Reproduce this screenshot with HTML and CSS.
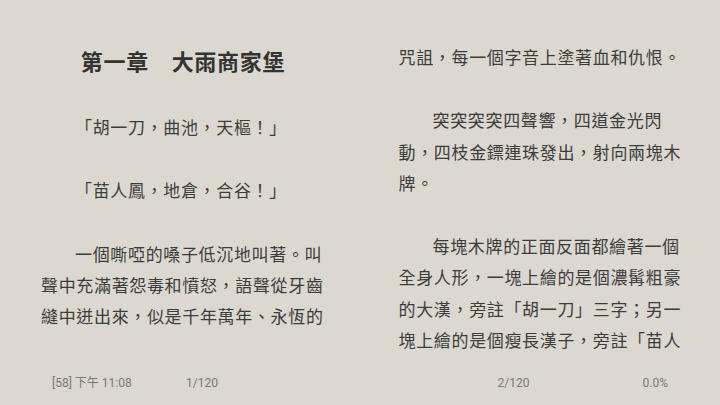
FILE: index.html
```html
<!DOCTYPE html>
<html lang="zh-TW">
<head>
    <meta charset="UTF-8">
    <meta name="viewport" content="width=device-width, initial-scale=1.0">
    <title>第一章 大雨商家堡</title>
    <link rel="stylesheet" href="styles.css">
</head>
<body>
    <div class="reader">
        <!-- Left page -->
        <section class="page page-left">
            <div class="page-text">
                <h1 class="chapter-title">第一章　大雨商家堡</h1>
                <p>「胡一刀，曲池，天樞！」</p>
                <p>「苗人鳳，地倉，合谷！」</p>
                <p>一個嘶啞的嗓子低沉地叫著。叫聲中充滿著怨毒和憤怒，語聲從牙齒縫中迸出來，似是千年萬年、永恆的</p>
            </div>
            <div class="page-footer">
                <span class="clock">[58] 下午 11:08</span>
                <span class="page-num">1/120</span>
            </div>
        </section>

        <!-- Right page -->
        <section class="page page-right">
            <div class="page-text">
                <p class="cont">咒詛，每一個字音上塗著血和仇恨。</p>
                <p>突突突突四聲響，四道金光閃動，四枝金鏢連珠發出，射向兩塊木牌。</p>
                <p>每塊木牌的正面反面都繪著一個全身人形，一塊上繪的是個濃髯粗豪的大漢，旁註「胡一刀」三字；另一塊上繪的是個瘦長漢子，旁註「苗人</p>
            </div>
            <div class="page-footer">
                <span class="page-num">2/120</span>
                <span class="progress">0.0%</span>
            </div>
        </section>
    </div>
</body>
</html>
```

FILE: styles.css
```css
/* General Styles */
body {
    margin: 0;
    padding: 0;
    background: #dcd8d0;
    color: #3c3c3c;
    font-family: "Noto Sans CJK TC", "Noto Sans", sans-serif;
}

.reader {
    display: flex;
    width: 720px;
    height: 405px;
    overflow: hidden;
}

/* Pages */
.page {
    width: 360px;
    height: 405px;
    display: flex;
    flex-direction: column;
}

.page-left {
    padding-left: 41px;
}

.page-right {
    padding-left: 36px;
}

.page-text {
    flex: 1;
    min-height: 0;
    overflow: hidden;
    width: 284px;
    font-size: 17px;
    letter-spacing: 0.66px;
    line-height: 31.3px;
}

.page-left .page-text {
    padding-top: 44px;
}

.page-right .page-text {
    padding-top: 41px;
}

.page-text p {
    margin: 0 0 32px;
    text-indent: 2em;
}

.page-text p:last-child {
    margin-bottom: 0;
}

.page-text p.cont {
    text-indent: 0;
}

.chapter-title {
    margin: 0 0 35px;
    font-size: 22px;
    font-weight: bold;
    line-height: 32px;
    letter-spacing: 0.7px;
    text-align: center;
    color: #333;
}

/* Footer */
.page-footer {
    display: flex;
    flex-shrink: 0;
    height: 32px;
    font-family: Roboto, "Noto Sans CJK TC", sans-serif;
    font-size: 12px;
    line-height: 20px;
    color: #777;
}

.page-left .page-footer {
    padding-left: 11px;
}

.page-left .clock {
    width: 134px;
}

.page-right .page-footer {
    padding-left: 99px;
}

.page-right .progress {
    margin-left: auto;
    margin-right: 52px;
}
```
